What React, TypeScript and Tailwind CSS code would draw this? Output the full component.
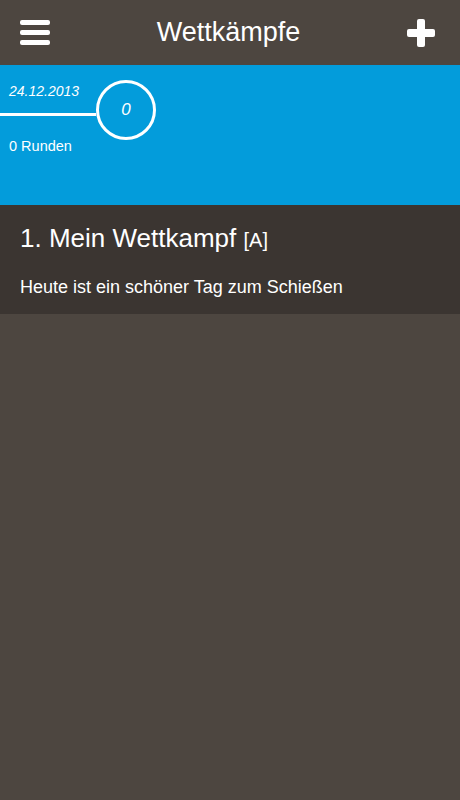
export default function App() {
  return (
    <div className="min-h-[800px] w-[460px] bg-[#4d4640] font-['Liberation_Sans',Arial,sans-serif] text-white">
      {/* header */}
      <div className="flex h-[65px] items-center justify-between px-5">
        <div className="flex w-[30px] flex-col gap-[5px]">
          <span className="block h-[5px] rounded-[2px] bg-white" />
          <span className="block h-[5px] rounded-[2px] bg-white" />
          <span className="block h-[5px] rounded-[2px] bg-white" />
        </div>
        <h1 className="text-[27px] leading-none">Wettkämpfe</h1>
        <svg width="28" height="28" viewBox="0 0 28 28" className="mr-[5px]">
          <rect x="10" y="0" width="8" height="28" rx="2" fill="white" />
          <rect x="0" y="10" width="28" height="8" rx="2" fill="white" />
        </svg>
      </div>

      {/* timeline */}
      <div className="h-[140px] bg-[#039cdb] pt-[15px]">
        <div className="flex items-start">
          <div className="mt-[4px] flex w-[96px] flex-col">
            <span className="pl-[9px] text-[14px] italic leading-none">24.12.2013</span>
            <span className="mt-[15px] block h-[3px] bg-white" />
            <span className="mt-[23px] pl-[9px] text-[14.5px] leading-none">0 Runden</span>
          </div>
          <div className="flex h-[60px] w-[60px] items-center justify-center rounded-full border-[3px] border-white text-[17px] italic">
            0
          </div>
        </div>
      </div>

      {/* entry */}
      <div className="bg-[#3b3531] px-5 pb-[18px] pt-[20px]">
        <div className="text-[26px] leading-none">
          1. Mein Wettkampf <span className="text-[20px]">[A]</span>
        </div>
        <p className="mt-[27px] text-[18px] leading-none">Heute ist ein schöner Tag zum Schießen</p>
      </div>
    </div>
  );
}
